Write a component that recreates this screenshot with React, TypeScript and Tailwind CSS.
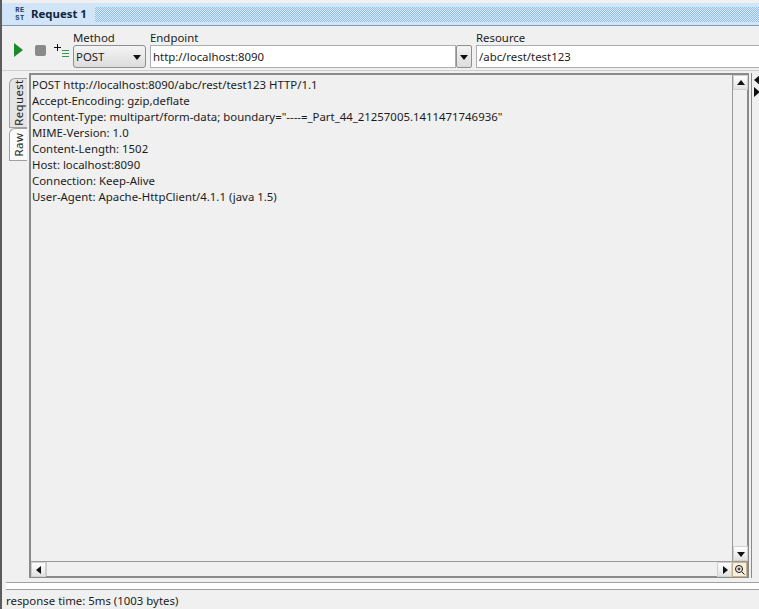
const requestLines = [
  "POST http://localhost:8090/abc/rest/test123 HTTP/1.1",
  "Accept-Encoding: gzip,deflate",
  'Content-Type: multipart/form-data; boundary="----=_Part_44_21257005.1411471746936"',
  "MIME-Version: 1.0",
  "Content-Length: 1502",
  "Host: localhost:8090",
  "Connection: Keep-Alive",
  "User-Agent: Apache-HttpClient/4.1.1 (java 1.5)",
];

function Arrow({ dir }: { dir: "up" | "down" | "left" | "right" }) {
  const points = {
    up: "1,7 9,7 5,2",
    down: "1,3 9,3 5,8",
    left: "7,1 7,9 2,5",
    right: "3,1 3,9 8,5",
  };
  return (
    <svg width="10" height="10" viewBox="0 0 10 10">
      <polygon points={points[dir]} fill="#111" />
    </svg>
  );
}

function ScrollButton({ dir }: { dir: "up" | "down" | "left" | "right" }) {
  return (
    <div className="flex h-[15px] w-[15px] shrink-0 items-center justify-center border border-[#d0d0d0] bg-gradient-to-b from-white to-[#e2e2e2]">
      <Arrow dir={dir} />
    </div>
  );
}

function SideTab({ label, active, height }: { label: string; active: boolean; height: string }) {
  return (
    <div
      className={`flex w-[18px] items-center justify-center rounded-tl-[6px] border border-r-0 border-[#a0a0a0] ${height} ${
        active ? "bg-[#e4e4e4]" : "bg-[#fbfbfb]"
      }`}
    >
      <span className="-rotate-90 whitespace-nowrap text-[11.4px] tracking-[0.4px] text-[#222]">{label}</span>
    </div>
  );
}

export default function App() {
  return (
    <div
      className="flex h-[609px] w-[759px] overflow-hidden bg-[#f0f0f0] text-[11.4px] text-[#1c1c1c]"
      style={{ fontFamily: '"Noto Sans", Tahoma, sans-serif' }}
    >
      <div className="w-[2px] shrink-0 bg-[#5c5c5c]" />
      <div className="flex min-w-0 flex-1 flex-col">
        {/* title bar */}
        <div className="mt-[3px] flex h-[23px] shrink-0 items-center border-b border-[#7f9db9] bg-[#d2e4f7] pl-[11px]">
          <div className="flex h-[16px] w-[14px] flex-col items-center justify-center font-['Liberation_Mono'] text-[7px] font-bold leading-[8px] tracking-[0.5px] text-[#24406e]">
            <span>RE</span>
            <span>ST</span>
          </div>
          <span className="ml-[4px] text-[11.4px] font-bold text-[#10243c]">Request 1</span>
          <div className="ml-[8px] h-[15px] flex-1 bg-[repeating-conic-gradient(#8fbce8_0%_25%,#dcebfa_0%_50%)] bg-[length:2px_2px]" />
        </div>

        {/* toolbar */}
        <div className="flex h-[45px] shrink-0 border-b border-[#cfcfcf]">
          <div className="mt-[17px] ml-[12px] flex h-[14px] items-center gap-[11px]">
            <svg width="9" height="14" viewBox="0 0 9 14" className="mr-[1px]">
              <polygon points="0,0 9,7 0,14" fill="#1c8a2c" />
            </svg>
            <div className="h-[11px] w-[11px] rounded-[2px] bg-[#8a8a8a]" />
            <svg width="16" height="15" viewBox="0 0 16 15" className="-ml-[3px]">
              <path d="M3.5 1v7M0 4.500h7" stroke="#111" fill="none" />
              <path d="M8 7.500h7M8 10.500h7M8 13.500h7" stroke="#2f9a48" fill="none" />
            </svg>
          </div>
          <div className="ml-[3px] flex w-[73px] flex-col">
            <span className="mt-[4px] h-[15px] leading-[15px]">Method</span>
            <div className="flex h-[23px] items-center justify-between rounded-[3px] border border-[#8e8f8f] bg-gradient-to-b from-[#f4f4f4] to-[#dcdcdc] pl-[2px] pr-[3px]">
              <span>POST</span>
              <Arrow dir="down" />
            </div>
          </div>
          <div className="ml-[4px] flex w-[322px] flex-col">
            <span className="mt-[4px] h-[15px] leading-[15px]">Endpoint</span>
            <div className="flex h-[23px]">
              <div className="flex-1 border border-[#abadb3] bg-white pl-[2px] leading-[21px]">http://localhost:8090</div>
              <div className="flex w-[16px] items-center justify-center rounded-[2px] border border-[#8e8f8f] bg-gradient-to-b from-[#f4f4f4] to-[#dcdcdc]">
                <Arrow dir="down" />
              </div>
            </div>
          </div>
          <div className="ml-[4px] flex min-w-0 flex-1 flex-col">
            <span className="mt-[4px] h-[15px] leading-[15px]">Resource</span>
            <div className="h-[23px] border border-r-0 border-[#abadb3] bg-white pl-[2px] leading-[21px]">/abc/rest/test123</div>
          </div>
        </div>

        {/* editor with side tabs */}
        <div className="mt-[2px] flex h-[505px] shrink-0">
          <div className="ml-[7px] flex w-[20px] shrink-0 flex-col pt-[5px]">
            <SideTab label="Request" active height="h-[50px]" />
            <SideTab label="Raw" active={false} height="h-[33px]" />
          </div>
          <div className="flex w-[720px] shrink-0 flex-col border-2 border-[#8a8a8a]">
            <div className="flex min-h-0 flex-1">
              <div className="flex-1 pl-px pt-[2px] leading-[16px]">
                {requestLines.map((line) => (
                  <div key={line} className="whitespace-nowrap">
                    {line}
                  </div>
                ))}
              </div>
              <div className="flex w-[15px] flex-col justify-between border-l border-[#9a9a9a] bg-[#f0f0f0]">
                <ScrollButton dir="up" />
                <ScrollButton dir="down" />
              </div>
            </div>
            <div className="flex h-[15px] shrink-0 border-t border-[#9a9a9a]">
              <ScrollButton dir="left" />
              <div className="flex-1 border-l border-[#c8c8c8]" />
              <ScrollButton dir="right" />
              <div className="flex h-[15px] w-[15px] shrink-0 items-center justify-center border border-[#c8b48c] bg-[#f6f0e2]">
                <svg width="11" height="11" viewBox="0 0 11 11">
                  <circle cx="5" cy="5" r="3.500" stroke="#111" fill="none" />
                  <path d="M8 8l2.500 2.500M3.500 5h3M5 3.500v3" stroke="#111" fill="none" />
                </svg>
              </div>
            </div>
          </div>
          <div className="ml-[2px] flex flex-col items-start gap-[2px] border-l border-[#8a8a8a] pl-[2px] pt-[2px]">
            <span className="h-0 w-0 border-y-[5px] border-r-[6px] border-y-transparent border-r-[#111]" />
            <span className="h-0 w-0 border-y-[5px] border-l-[6px] border-y-transparent border-l-[#111]" />
          </div>
        </div>

        {/* status bar */}
        <div className="mt-[4px] ml-[4px] h-[8px] shrink-0 border-y border-[#9f9f9f] bg-white" />
        <div className="ml-[4px] flex-1 pt-[3px] leading-[16px]">response time: 5ms (1003 bytes)</div>
      </div>
    </div>
  );
}
